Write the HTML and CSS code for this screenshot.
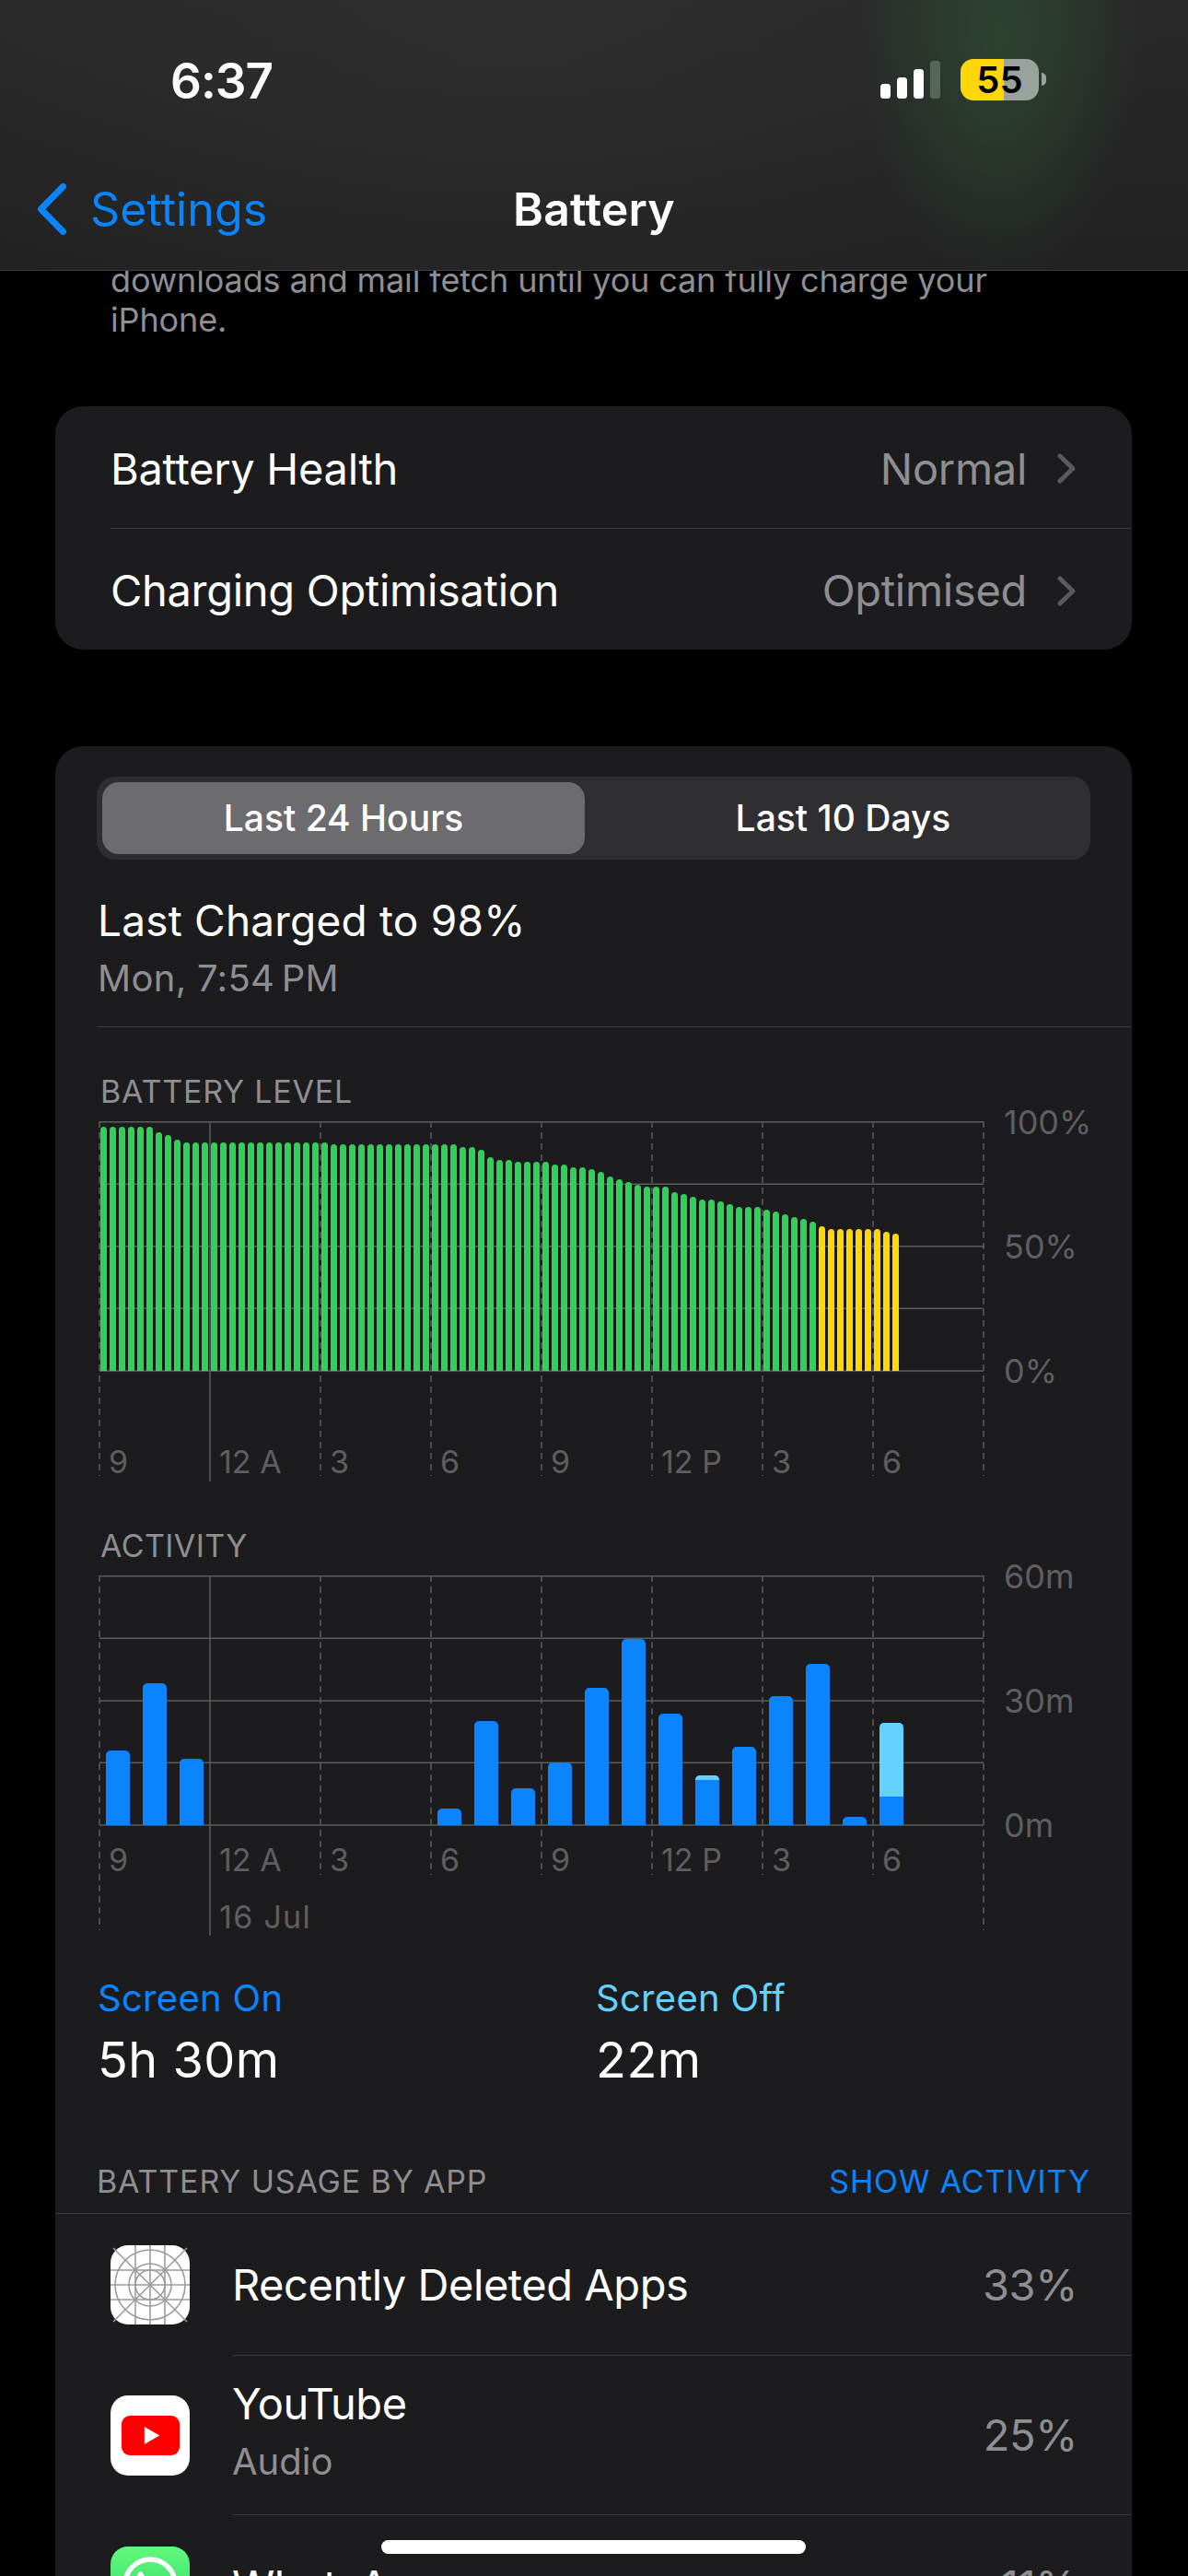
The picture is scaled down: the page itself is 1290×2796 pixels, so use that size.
FILE: index.html
```html
<!DOCTYPE html>
<html lang="en">
<head>
<meta charset="utf-8">
<title>Battery</title>
<link rel="stylesheet" href="styles.css">
</head>
<body>
<div class="screen">
  <header class="nav">
    <div class="status">
      <span class="time">6:37</span>
      <div class="status-right">
        <svg class="signal" width="65" height="41" viewBox="0 0 65 41">
          <rect x="0" y="25" width="11" height="16" rx="3.5" fill="#fff"/>
          <rect x="18" y="18" width="11" height="23" rx="3.5" fill="#fff"/>
          <rect x="36" y="9" width="11" height="32" rx="3.5" fill="#fff"/>
          <rect x="54" y="0" width="11" height="41" rx="3.5" fill="#55665a"/>
        </svg>
        <div class="batt">55</div>
      </div>
    </div>
    <div class="navrow">
      <div class="back">
        <svg width="31" height="56" viewBox="0 0 31 56"><path d="M27.5 3.5 L3.5 28 L27.5 52.5" fill="none" stroke="#0a84ff" stroke-width="7" stroke-linecap="round" stroke-linejoin="round"/></svg>
        <span>Settings</span>
      </div>
      <div class="title">Battery</div>
      <div></div>
    </div>
  </header>

  <main class="content">
    <p class="footnote">downloads and mail fetch until you can fully charge your<br>iPhone.</p>

    <section class="card card-health">
      <div class="row">
        <span class="row-label">Battery Health</span>
        <span class="row-value">Normal</span>
        <svg class="chev" width="20" height="33" viewBox="0 0 20 33"><path d="M3 3 L17 16.5 L3 30" fill="none" stroke="#5a5a5e" stroke-width="5" stroke-linecap="round" stroke-linejoin="round"/></svg>
      </div>
      <div class="sep sep-health"></div>
      <div class="row">
        <span class="row-label">Charging Optimisation</span>
        <span class="row-value">Optimised</span>
        <svg class="chev" width="20" height="33" viewBox="0 0 20 33"><path d="M3 3 L17 16.5 L3 30" fill="none" stroke="#5a5a5e" stroke-width="5" stroke-linecap="round" stroke-linejoin="round"/></svg>
      </div>
    </section>

    <section class="card card-usage">
      <div class="segment">
        <div class="seg seg-on">Last 24 Hours</div>
        <div class="seg seg-off">Last 10 Days</div>
      </div>
      <div class="charged">
        <div class="charged-title">Last Charged to 98%</div>
        <div class="charged-sub">Mon, 7:54&#8201;PM</div>
      </div>
      <div class="sep sep-charged"></div>

      <h2 class="chart-title chart-title-first">BATTERY LEVEL</h2>
      <div class="chart">
        <svg class="grid" width="964" height="392" viewBox="0 0 964 392">
          <g class="h">
            <line x1="0" x2="960" y1="0.7" y2="0.7"/><line x1="0" x2="960" y1="68.3" y2="68.3"/><line x1="0" x2="960" y1="135.7" y2="135.7"/><line x1="0" x2="960" y1="203.3" y2="203.3"/><line x1="0" x2="960" y1="271" y2="271"/>
          </g>
          <g class="v">
            <line x1="0" x2="0" y1="0" y2="385"/><line x1="240" x2="240" y1="0" y2="385"/><line x1="360" x2="360" y1="0" y2="385"/><line x1="480" x2="480" y1="0" y2="385"/><line x1="600" x2="600" y1="0" y2="385"/><line x1="720" x2="720" y1="0" y2="385"/><line x1="840" x2="840" y1="0" y2="385"/><line x1="960" x2="960" y1="0" y2="385"/>
          </g>
          <line class="s" x1="120" x2="120" y1="0" y2="391"/>
        </svg>
        <div class="plot plot-battery">
          <i class="g" style="height:264.7px"></i><i class="g" style="height:264.7px"></i><i class="g" style="height:264.7px"></i><i class="g" style="height:264.7px"></i><i class="g" style="height:264.7px"></i><i class="g" style="height:264.7px"></i>
          <i class="g" style="height:258.7px"></i><i class="g" style="height:255.7px"></i><i class="g" style="height:250.7px"></i>
          <i class="g" style="height:247.7px"></i><i class="g" style="height:247.7px"></i><i class="g" style="height:247.7px"></i><i class="g" style="height:247.7px"></i><i class="g" style="height:247.7px"></i><i class="g" style="height:247.7px"></i><i class="g" style="height:247.7px"></i><i class="g" style="height:247.7px"></i><i class="g" style="height:247.7px"></i><i class="g" style="height:247.7px"></i><i class="g" style="height:247.7px"></i><i class="g" style="height:247.7px"></i><i class="g" style="height:247.7px"></i><i class="g" style="height:247.7px"></i><i class="g" style="height:247.7px"></i><i class="g" style="height:247.7px"></i>
          <i class="g" style="height:245.7px"></i><i class="g" style="height:245.7px"></i><i class="g" style="height:245.7px"></i><i class="g" style="height:245.7px"></i><i class="g" style="height:245.7px"></i><i class="g" style="height:245.7px"></i><i class="g" style="height:245.7px"></i><i class="g" style="height:245.7px"></i><i class="g" style="height:245.7px"></i><i class="g" style="height:245.7px"></i><i class="g" style="height:245.7px"></i><i class="g" style="height:245.7px"></i><i class="g" style="height:245.7px"></i><i class="g" style="height:245.7px"></i>
          <i class="g" style="height:242.7px"></i><i class="g" style="height:242.7px"></i><i class="g" style="height:239.7px"></i><i class="g" style="height:231.7px"></i><i class="g" style="height:228.7px"></i><i class="g" style="height:228.7px"></i>
          <i class="g" style="height:226.7px"></i><i class="g" style="height:226.7px"></i><i class="g" style="height:226.7px"></i><i class="g" style="height:226.7px"></i>
          <i class="g" style="height:223.7px"></i><i class="g" style="height:223.7px"></i><i class="g" style="height:220.7px"></i><i class="g" style="height:220.7px"></i><i class="g" style="height:218.7px"></i><i class="g" style="height:215.7px"></i>
          <i class="g" style="height:210.7px"></i><i class="g" style="height:207.7px"></i><i class="g" style="height:204.7px"></i><i class="g" style="height:201.7px"></i><i class="g" style="height:199.7px"></i><i class="g" style="height:199.7px"></i><i class="g" style="height:199.7px"></i>
          <i class="g" style="height:193.7px"></i><i class="g" style="height:191.7px"></i><i class="g" style="height:188.7px"></i><i class="g" style="height:185.7px"></i><i class="g" style="height:185.7px"></i><i class="g" style="height:183.7px"></i><i class="g" style="height:180.7px"></i>
          <i class="g" style="height:177.7px"></i><i class="g" style="height:177.7px"></i><i class="g" style="height:177.7px"></i><i class="g" style="height:174.7px"></i><i class="g" style="height:172.7px"></i><i class="g" style="height:169.7px"></i><i class="g" style="height:166.7px"></i><i class="g" style="height:164.7px"></i><i class="g" style="height:161.7px"></i>
          <i class="y" style="height:156.7px"></i><i class="y" style="height:153.7px"></i><i class="y" style="height:153.7px"></i><i class="y" style="height:153.7px"></i><i class="y" style="height:153.7px"></i><i class="y" style="height:153.7px"></i><i class="y" style="height:153.7px"></i><i class="y" style="height:150.7px"></i><i class="y" style="height:148.7px"></i>
        </div>
        <div class="yaxis"><span>100%</span><span>50%</span><span>0%</span></div>
        <div class="hours hours-battery"><span>9</span><span>12 A</span><span>3</span><span>6</span><span>9</span><span>12 P</span><span>3</span><span>6</span></div>
      </div>

      <h2 class="chart-title chart-title-second">ACTIVITY</h2>
      <div class="chart">
        <svg class="grid" width="964" height="392" viewBox="0 0 964 392">
          <g class="h">
            <line x1="0" x2="960" y1="0.7" y2="0.7"/><line x1="0" x2="960" y1="68.3" y2="68.3"/><line x1="0" x2="960" y1="136" y2="136"/><line x1="0" x2="960" y1="203.3" y2="203.3"/><line x1="0" x2="960" y1="271" y2="271"/>
          </g>
          <g class="v">
            <line x1="0" x2="0" y1="0" y2="385"/><line x1="240" x2="240" y1="0" y2="325"/><line x1="360" x2="360" y1="0" y2="325"/><line x1="480" x2="480" y1="0" y2="325"/><line x1="600" x2="600" y1="0" y2="325"/><line x1="720" x2="720" y1="0" y2="325"/><line x1="840" x2="840" y1="0" y2="325"/><line x1="960" x2="960" y1="0" y2="385"/>
          </g>
          <line class="s" x1="120" x2="120" y1="0" y2="391"/>
        </svg>
        <div class="plot plot-activity">
          <i class="b" style="height:81px"></i><i class="b" style="height:153.7px"></i><i class="b" style="height:72px"></i>
          <i class="n"></i><i class="n"></i><i class="n"></i><i class="n"></i><i class="n"></i><i class="n"></i>
          <i class="b" style="height:18px"></i><i class="b" style="height:112.7px"></i><i class="b" style="height:40px"></i><i class="b" style="height:67.7px"></i><i class="b" style="height:149px"></i><i class="b" style="height:201.7px"></i><i class="b" style="height:121px"></i>
          <i class="b" style="height:54px"><b style="height:5px"></b></i>
          <i class="b" style="height:85px"></i><i class="b" style="height:140px"></i><i class="b" style="height:175px"></i><i class="b" style="height:9px"></i>
          <i class="b" style="height:111px"><b style="height:80px"></b></i>
        </div>
        <div class="yaxis"><span>60m</span><span>30m</span><span>0m</span></div>
        <div class="hours hours-activity"><span>9</span><span>12 A</span><span>3</span><span>6</span><span>9</span><span>12 P</span><span>3</span><span>6</span></div>
        <div class="hours date"><span></span><span>16 Jul</span></div>
      </div>

      <div class="stats">
        <div>
          <div class="stat-label on">Screen On</div>
          <div class="stat-value">5h 30m</div>
        </div>
        <div>
          <div class="stat-label off">Screen Off</div>
          <div class="stat-value">22m</div>
        </div>
      </div>

      <div class="usage-head">
        <span>BATTERY USAGE BY APP</span>
        <span class="show">SHOW ACTIVITY</span>
      </div>
      <div class="sep"></div>

      <div class="app app-one">
        <svg class="icon" width="86" height="86" viewBox="0 0 86 86">
          <rect width="86" height="86" rx="19" fill="#fff"/>
          <g fill="none" stroke="#9c9c9c" stroke-width="1.6">
            <path d="M3 3 L83 83 M83 3 L3 83"/>
            <path d="M27 0 V86 M43 0 V86 M59 0 V86 M0 27 H86 M0 43 H86 M0 59 H86"/>
            <circle cx="43" cy="43" r="38"/>
            <circle cx="43" cy="43" r="23"/>
            <circle cx="43" cy="43" r="16"/>
          </g>
        </svg>
        <span class="app-name">Recently Deleted Apps</span>
        <span class="pct">33%</span>
      </div>
      <div class="sep sep-app"></div>
      <div class="app app-two">
        <svg class="icon" width="86" height="87" viewBox="0 0 86 87">
          <rect width="86" height="87" rx="19" fill="#fff"/>
          <rect x="12" y="22" width="63" height="43" rx="9" fill="#fe0000"/>
          <path d="M36.800 34 L53.300 43.500 L36.800 53 Z" fill="#fff"/>
        </svg>
        <div class="app-text">
          <div class="app-name">YouTube</div>
          <div class="app-sub">Audio</div>
        </div>
        <span class="pct">25%</span>
      </div>
      <div class="sep sep-app"></div>
      <div class="app app-one">
        <svg class="icon" width="86" height="86" viewBox="0 0 86 86">
          <defs><linearGradient id="wa" x1="0" y1="0" x2="0" y2="1"><stop offset="0" stop-color="#62f97c"/><stop offset="1" stop-color="#25d366"/></linearGradient></defs>
          <rect width="86" height="86" rx="19" fill="url(#wa)"/>
          <circle cx="43" cy="41" r="27" fill="none" stroke="#fff" stroke-width="5.500"/>
          <path d="M29 32 C27 40 33 52 46 56 C51 57 56 54 56 50 L49 46 L45 49 C40 47 37 43 35 38 L38 34 L34 27 C31 27 29 29 29 32 Z" fill="#fff"/>
        </svg>
        <span class="app-name">WhatsApp</span>
        <span class="pct">11%</span>
      </div>
    </section>
  </main>
  <div class="home"></div>
</div>
</body>
</html>
```
FILE: styles.css
```css
* { box-sizing: border-box; }
html, body { margin: 0; padding: 0; background: #000; }
body { font-family: "Inter", "Liberation Sans", sans-serif; color: #fff; }

.screen { position: relative; width: 1290px; height: 2796px; overflow: hidden; background: #000; }

/* Navigation bar overlays the scrolled content */
.nav {
  position: absolute; top: 0; left: 0; right: 0; z-index: 2;
  height: 294px;
  padding-top: 58px;
  border-bottom: 1px solid #3b3b3b;
  background:
    radial-gradient(ellipse 150px 270px at 1085px 40px, rgba(46, 84, 54, .62), rgba(46, 84, 54, 0)),
    radial-gradient(ellipse 700px 380px at 560px 40px, rgba(60, 60, 60, .3), rgba(60, 60, 60, 0)),
    linear-gradient(180deg, #292929, #222);
}
.status { display: flex; align-items: center; justify-content: space-between; height: 60px; padding: 0 154px 0 185px; }
.time { font-size: 53px; line-height: 60px; font-weight: 600; letter-spacing: -1px; }
.status-right { display: flex; align-items: center; gap: 22px; margin-bottom: 3px; }
.signal { display: block; }
.batt {
  position: relative; width: 85px; height: 45px; border-radius: 14px; margin-right: 8px;
  background: linear-gradient(90deg, #ffd60a 55.3%, #99a29c 55.3%);
  color: #000; font-size: 40px; font-weight: 600; line-height: 45px; text-align: center;
}
.batt::after {
  content: ""; position: absolute; right: -8px; top: 15px; width: 5px; height: 14px;
  border-radius: 0 7px 7px 0; background: #99a29c;
}
.navrow { display: grid; grid-template-columns: 1fr auto 1fr; align-items: center; height: 60px; margin-top: 79px; padding-left: 41px; padding-right: 41px; }
.back { display: flex; align-items: center; gap: 26px; color: #0a84ff; font-size: 50px; line-height: 60px; letter-spacing: .1px; }
.back svg { display: block; }
.title { font-size: 50px; line-height: 60px; font-weight: 600; letter-spacing: .2px; }

.content { padding-top: 283px; }
.footnote { margin: 0 0 72px; padding-left: 120px; color: #8e8e93; font-size: 36px; line-height: 43px; letter-spacing: -.13px; }

.card { margin: 0 61px 0 60px; background: #1c1c1e; border-radius: 30px; }
.card-health { height: 264px; margin-bottom: 105px; }
.row { display: flex; align-items: center; height: 131.500px; padding: 4px 61px 0 60px; font-size: 47px; letter-spacing: -.3px; }
.row-label { flex: 1; line-height: 60px; }
.row-value { color: #8e8e93; line-height: 60px; }
.chev { display: block; margin-left: 33px; }

.sep { height: 1px; background: #3a3a3c; }
.sep-health { margin-left: 60px; }
.sep-charged { margin-left: 45px; }
.sep-app { margin-left: 192px; }

.card-usage { padding-top: 33px; overflow: hidden; height: 2100px; }
.segment { display: flex; height: 90px; margin: 0 45px; padding: 6px; border-radius: 20px; background: #2f2f33; }
.seg { font-size: 39px; line-height: 78px; text-align: center; font-weight: 500; }
.seg-on { width: 524px; border-radius: 18px; background: #6b6b70; }
.seg-off { flex: 1; padding-left: 18px; }

.charged { margin: 33px 0 0 46px; padding-bottom: 22px; }
.charged-title { font-size: 46px; line-height: 66px; letter-spacing: .2px; }
.charged-sub { color: #8e8e93; font-size: 40px; line-height: 60px; letter-spacing: .3px; }

.chart-title { margin: 0 0 12px 49px; color: #8e8e93; font-size: 34px; line-height: 40px; font-weight: 400; letter-spacing: .8px; }
.chart-title-first { margin-top: 50px; }
.chart-title-second { margin-top: 49px; letter-spacing: .4px; }

.chart { position: relative; display: grid; grid-template-columns: 982px auto; height: 392px; margin-left: 48px; align-content: start; }
.grid { position: absolute; left: 0; top: 0; overflow: visible; }
.grid .h line { stroke: #5c5c5e; stroke-width: 1.400; }
.grid .v line { stroke: #5c5c5e; stroke-width: 1.500; stroke-dasharray: 7 5; }
.grid .s { stroke: #5c5c5e; stroke-width: 1.500; }

.plot { position: relative; display: flex; align-items: flex-end; width: 960px; height: 271px; }
.plot i { display: block; flex: none; }
.plot-battery { gap: 3px; padding-left: 1.300px; }
.plot-battery .g, .plot-battery .y { width: 7px; border-radius: 3.500px 3.500px 0 0; }
.plot-battery .g { background: #30d158; }
.plot-battery .y { background: #ffd60a; }
.plot-activity { gap: 13.600px; padding-left: 7px; }
.plot-activity .b, .plot-activity .n { width: 26.400px; }
.plot-activity .b { border-radius: 5px 5px 0 0; background: #0a84ff; overflow: hidden; }
.plot-activity b { display: block; background: #64d2ff; }

.yaxis { display: grid; grid-template-rows: repeat(3, 135.200px); align-items: center; margin: -67px 0 -67px; color: #5f5f63; font-size: 36px; line-height: 40px; }

.hours { position: relative; display: grid; grid-column: 1; grid-template-columns: repeat(8, 120px); color: #5f5f63; font-size: 34px; line-height: 40px; }
.hours span { padding-left: 10px; }
.hours-battery { margin-top: 78px; }
.hours-activity { margin-top: 17px; }
.date { margin-top: 22px; letter-spacing: 1.300px; white-space: nowrap; }

.stats { display: grid; grid-template-columns: 541px 1fr; margin: 43px 0 0 46px; }
.stat-label { font-size: 40px; line-height: 48px; letter-spacing: .3px; }
.on { color: #0a84ff; }
.off { color: #64d2ff; }
.stat-value { margin-top: 11px; font-size: 54px; line-height: 64px; letter-spacing: .5px; }

.usage-head { display: flex; justify-content: space-between; margin: 80px 45px 0; padding-bottom: 14px; color: #8e8e93; font-size: 34px; line-height: 40px; letter-spacing: .85px; }
.show { color: #0a84ff; }

.app { display: flex; align-items: center; padding: 0 59px 0 60px; }
.app-one { height: 153px; }
.app-two { height: 172px; }
.icon { display: block; flex: none; margin-right: 46px; }
.app .app-name { font-size: 47px; line-height: 56px; letter-spacing: -.45px; }
.app > .app-name { flex: 1; }
.app-text { flex: 1; }
.app-sub { color: #8e8e93; font-size: 40px; line-height: 69px; }
.pct { color: #8e8e93; font-size: 47px; line-height: 56px; letter-spacing: -.4px; }

.home { position: absolute; left: 414px; top: 2757px; z-index: 3; width: 461px; height: 15px; border-radius: 7.500px; background: #fff; }
```
